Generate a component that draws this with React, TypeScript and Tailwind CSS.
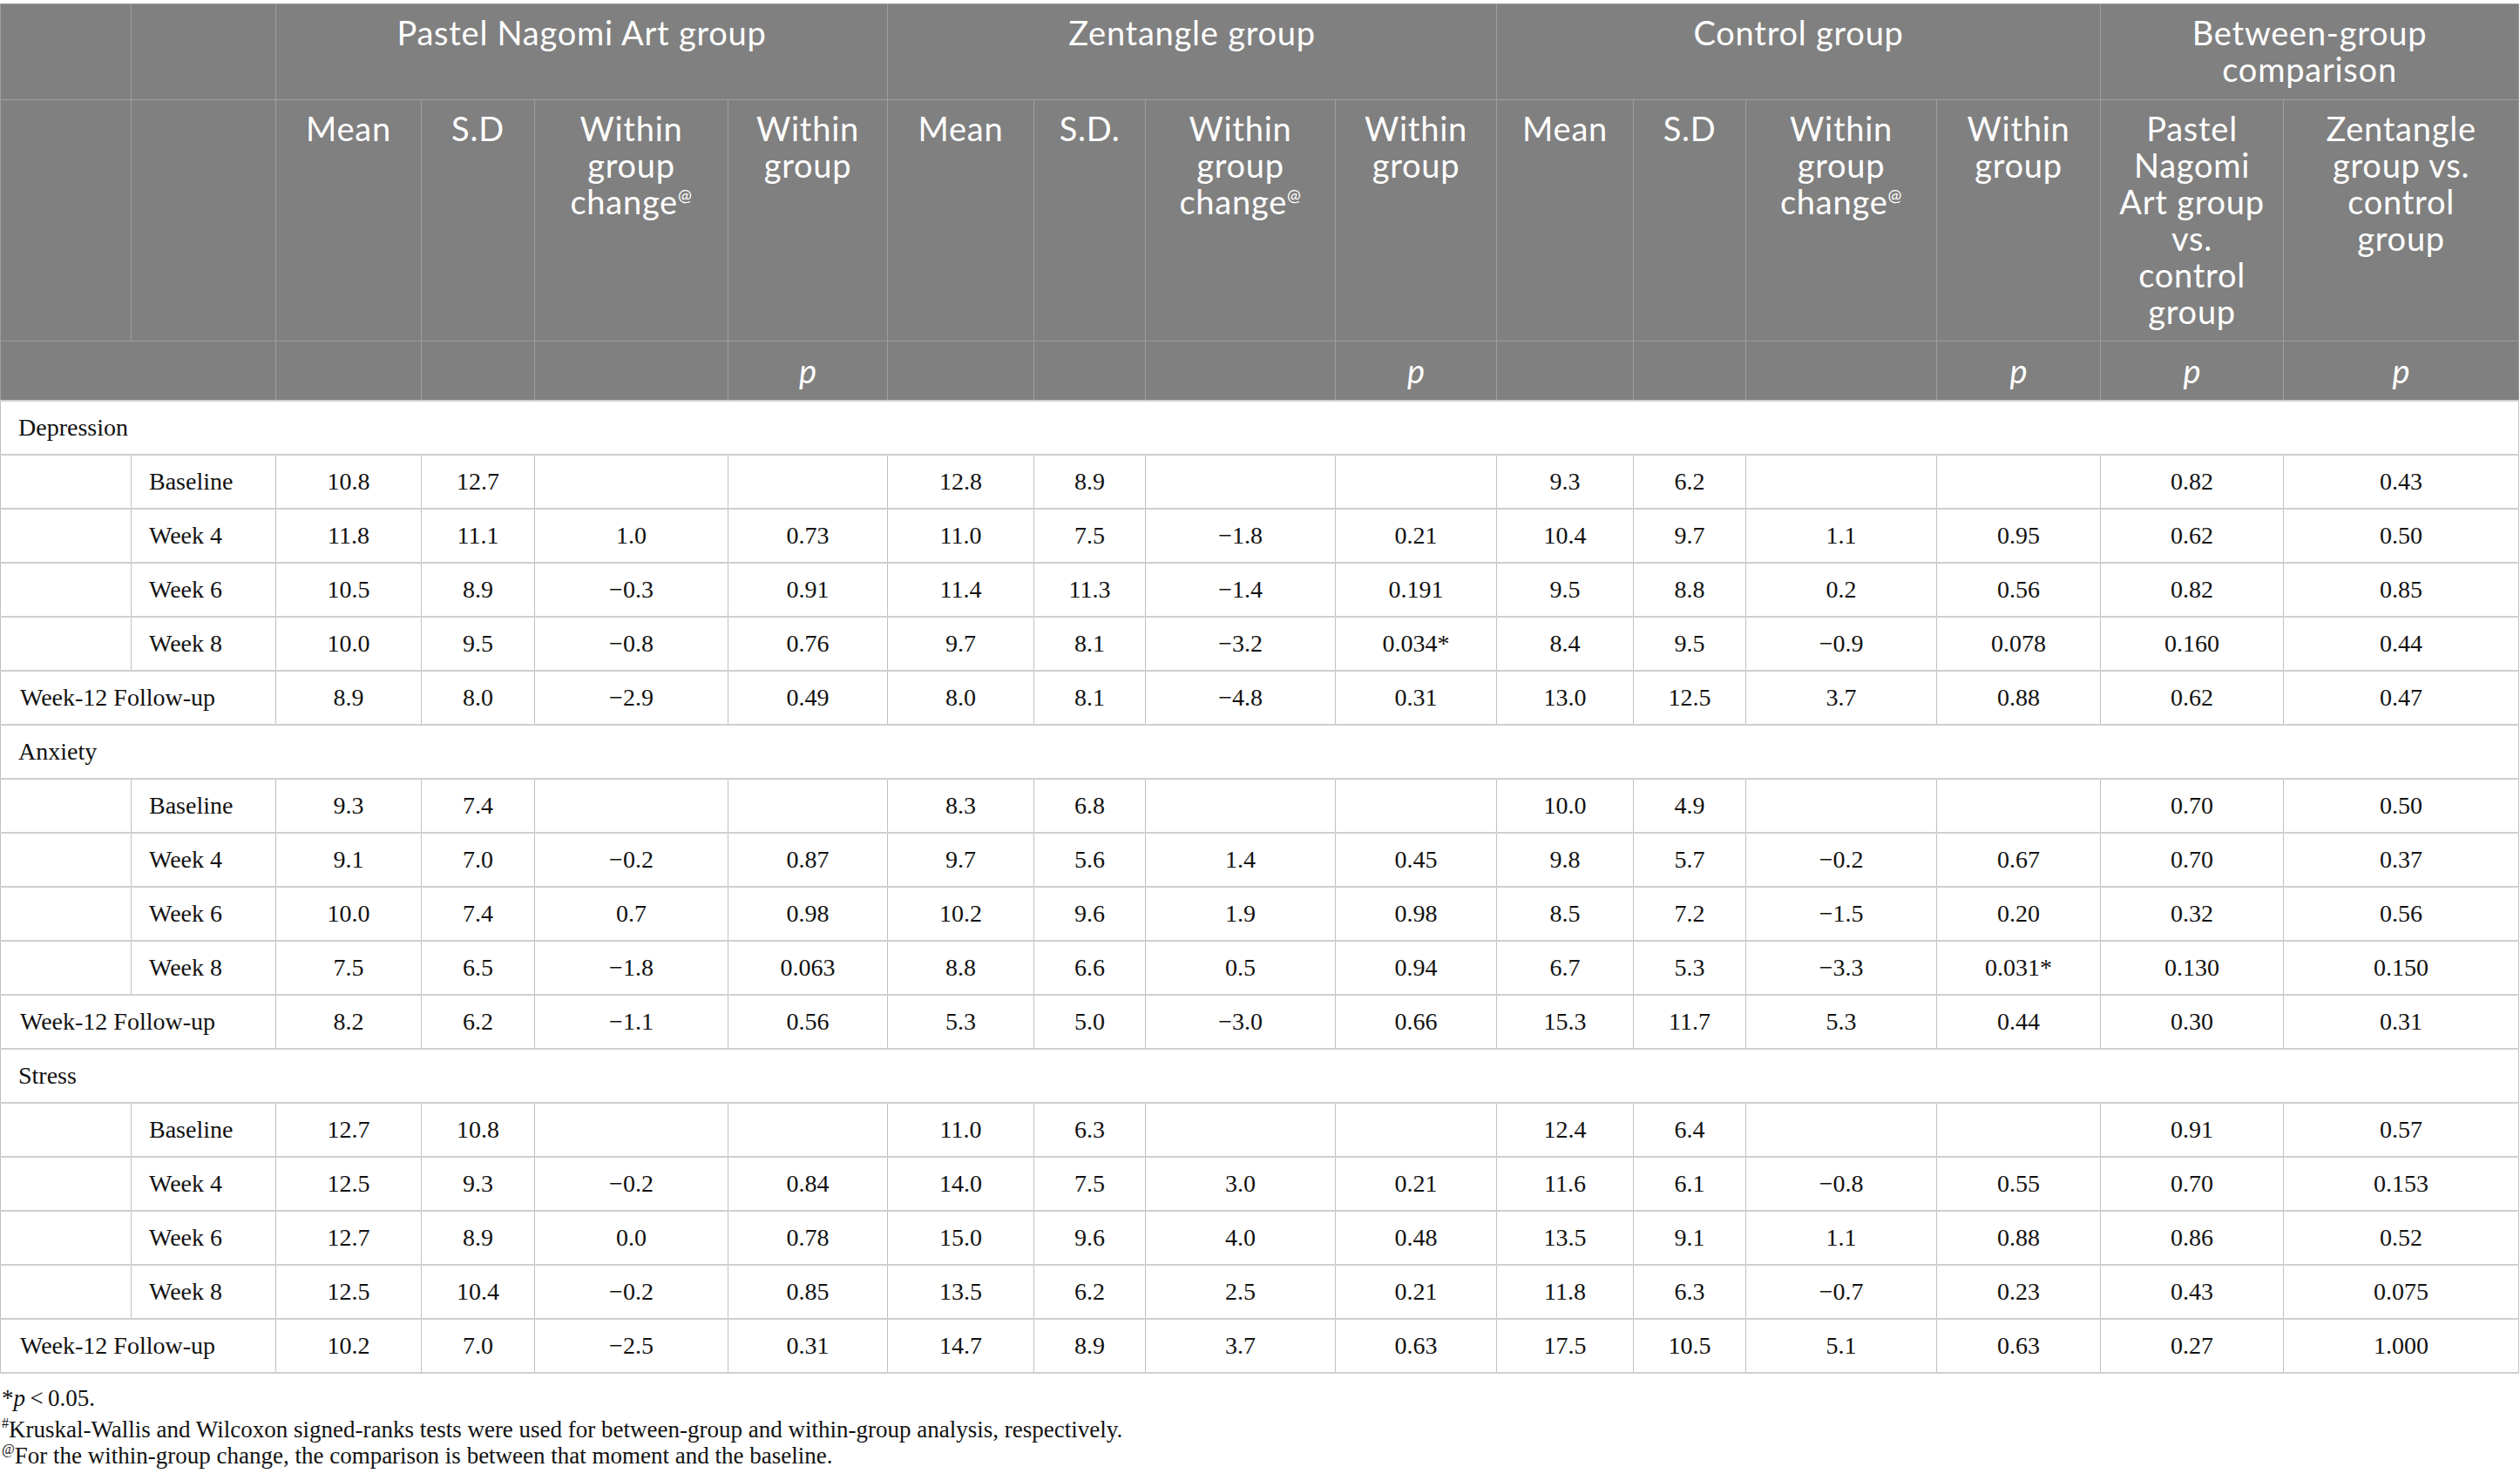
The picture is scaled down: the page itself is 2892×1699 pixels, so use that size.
import React from "react";

type Row = { label: string; follow?: boolean; vals: string[] };
type Section = { name: string; rows: Row[] };

const sections: Section[] = [
  {
    name: "Depression",
    rows: [
      { label: "Baseline", vals: ["10.8", "12.7", "", "", "12.8", "8.9", "", "", "9.3", "6.2", "", "", "0.82", "0.43"] },
      { label: "Week 4", vals: ["11.8", "11.1", "1.0", "0.73", "11.0", "7.5", "−1.8", "0.21", "10.4", "9.7", "1.1", "0.95", "0.62", "0.50"] },
      { label: "Week 6", vals: ["10.5", "8.9", "−0.3", "0.91", "11.4", "11.3", "−1.4", "0.191", "9.5", "8.8", "0.2", "0.56", "0.82", "0.85"] },
      { label: "Week 8", vals: ["10.0", "9.5", "−0.8", "0.76", "9.7", "8.1", "−3.2", "0.034*", "8.4", "9.5", "−0.9", "0.078", "0.160", "0.44"] },
      { label: "Week-12 Follow-up", follow: true, vals: ["8.9", "8.0", "−2.9", "0.49", "8.0", "8.1", "−4.8", "0.31", "13.0", "12.5", "3.7", "0.88", "0.62", "0.47"] },
    ],
  },
  {
    name: "Anxiety",
    rows: [
      { label: "Baseline", vals: ["9.3", "7.4", "", "", "8.3", "6.8", "", "", "10.0", "4.9", "", "", "0.70", "0.50"] },
      { label: "Week 4", vals: ["9.1", "7.0", "−0.2", "0.87", "9.7", "5.6", "1.4", "0.45", "9.8", "5.7", "−0.2", "0.67", "0.70", "0.37"] },
      { label: "Week 6", vals: ["10.0", "7.4", "0.7", "0.98", "10.2", "9.6", "1.9", "0.98", "8.5", "7.2", "−1.5", "0.20", "0.32", "0.56"] },
      { label: "Week 8", vals: ["7.5", "6.5", "−1.8", "0.063", "8.8", "6.6", "0.5", "0.94", "6.7", "5.3", "−3.3", "0.031*", "0.130", "0.150"] },
      { label: "Week-12 Follow-up", follow: true, vals: ["8.2", "6.2", "−1.1", "0.56", "5.3", "5.0", "−3.0", "0.66", "15.3", "11.7", "5.3", "0.44", "0.30", "0.31"] },
    ],
  },
  {
    name: "Stress",
    rows: [
      { label: "Baseline", vals: ["12.7", "10.8", "", "", "11.0", "6.3", "", "", "12.4", "6.4", "", "", "0.91", "0.57"] },
      { label: "Week 4", vals: ["12.5", "9.3", "−0.2", "0.84", "14.0", "7.5", "3.0", "0.21", "11.6", "6.1", "−0.8", "0.55", "0.70", "0.153"] },
      { label: "Week 6", vals: ["12.7", "8.9", "0.0", "0.78", "15.0", "9.6", "4.0", "0.48", "13.5", "9.1", "1.1", "0.88", "0.86", "0.52"] },
      { label: "Week 8", vals: ["12.5", "10.4", "−0.2", "0.85", "13.5", "6.2", "2.5", "0.21", "11.8", "6.3", "−0.7", "0.23", "0.43", "0.075"] },
      { label: "Week-12 Follow-up", follow: true, vals: ["10.2", "7.0", "−2.5", "0.31", "14.7", "8.9", "3.7", "0.63", "17.5", "10.5", "5.1", "0.63", "0.27", "1.000"] },
    ],
  },
];

const widths = [150, 166, 167, 130, 222, 183, 168, 128, 218, 185, 157, 129, 219, 188, 210, 270];

const th =
  "border border-[#9e9e9e] bg-[#808080] text-white font-normal align-top text-center px-1 pt-[11px] text-[38px] leading-[42px] tracking-[0.02em]";
const thP =
  "border border-[#9e9e9e] bg-[#808080] text-white font-normal align-middle text-center text-[38px] leading-[42px] italic";
const td =
  "border-x border-x-[#c2c2c2] border-y-2 border-y-[#cfcfcf] text-center align-middle text-[28px] text-[#111]";

function Change() {
  return (
    <>
      Within
      <br />
      group
      <br />
      change<sup className="text-[19px] top-[-15px]">@</sup>
    </>
  );
}

function Within() {
  return (
    <>
      Within
      <br />
      group
    </>
  );
}

export default function App() {
  return (
    <div className="bg-white w-[2892px] min-h-[1699px] pt-[4px]">
      <table className="table-fixed border-collapse w-[2890px] font-['Liberation_Serif',serif]">
        <colgroup>
          {widths.map((w, i) => (
            <col key={i} style={{ width: w }} />
          ))}
        </colgroup>
        <thead className="font-['Lato','Open_Sans',sans-serif]">
          <tr className="h-[110px]">
            <th className={th}></th>
            <th className={th}></th>
            <th className={th} colSpan={4}>Pastel Nagomi Art group</th>
            <th className={th} colSpan={4}>Zentangle group</th>
            <th className={th} colSpan={4}>Control group</th>
            <th className={th} colSpan={2}>
              Between-group
              <br />
              comparison
            </th>
          </tr>
          <tr className="h-[277px]">
            <th className={th}></th>
            <th className={th}></th>
            <th className={th}>Mean</th>
            <th className={th}>S.D</th>
            <th className={th}><Change /></th>
            <th className={th}><Within /></th>
            <th className={th}>Mean</th>
            <th className={th}>S.D.</th>
            <th className={th}><Change /></th>
            <th className={th}><Within /></th>
            <th className={th}>Mean</th>
            <th className={th}>S.D</th>
            <th className={th}><Change /></th>
            <th className={th}><Within /></th>
            <th className={th}>
              Pastel
              <br />
              Nagomi
              <br />
              Art group
              <br />
              vs.
              <br />
              control
              <br />
              group
            </th>
            <th className={th}>
              Zentangle
              <br />
              group vs.
              <br />
              control
              <br />
              group
            </th>
          </tr>
          <tr className="h-[68px]">
            <th className={thP} colSpan={2}></th>
            <th className={thP}></th>
            <th className={thP}></th>
            <th className={thP}></th>
            <th className={thP}>p</th>
            <th className={thP}></th>
            <th className={thP}></th>
            <th className={thP}></th>
            <th className={thP}>p</th>
            <th className={thP}></th>
            <th className={thP}></th>
            <th className={thP}></th>
            <th className={thP}>p</th>
            <th className={thP}>p</th>
            <th className={thP}>p</th>
          </tr>
        </thead>
        <tbody>
          {sections.map((s) => (
            <React.Fragment key={s.name}>
              <tr className="h-[62px]">
                <td className={td + " text-left pl-[20px]"} colSpan={16}>
                  {s.name}
                </td>
              </tr>
              {s.rows.map((r) => (
                <tr key={s.name + r.label} className="h-[62px]">
                  {r.follow ? (
                    <td className={td + " text-left pl-[22px]"} colSpan={2}>
                      {r.label}
                    </td>
                  ) : (
                    <>
                      <td className={td}></td>
                      <td className={td + " text-left pl-[20px]"}>{r.label}</td>
                    </>
                  )}
                  {r.vals.map((v, i) => (
                    <td key={i} className={td}>
                      {v}
                    </td>
                  ))}
                </tr>
              ))}
            </React.Fragment>
          ))}
        </tbody>
      </table>
      <div className="mt-[13px] pl-[2px] font-['Liberation_Serif',serif] text-[27px] leading-[30px] text-[#111]">
        <p className="mb-[6px]">
          *<i>p</i>&thinsp;&lt;&thinsp;0.05.
        </p>
        <p>
          <sup className="text-[16px] top-[-11px]">#</sup>Kruskal-Wallis and Wilcoxon signed-ranks tests were used for between-group and within-group analysis, respectively.
        </p>
        <p>
          <sup className="text-[16px] top-[-11px]">@</sup>For the within-group change, the comparison is between that moment and the baseline.
        </p>
      </div>
    </div>
  );
}
